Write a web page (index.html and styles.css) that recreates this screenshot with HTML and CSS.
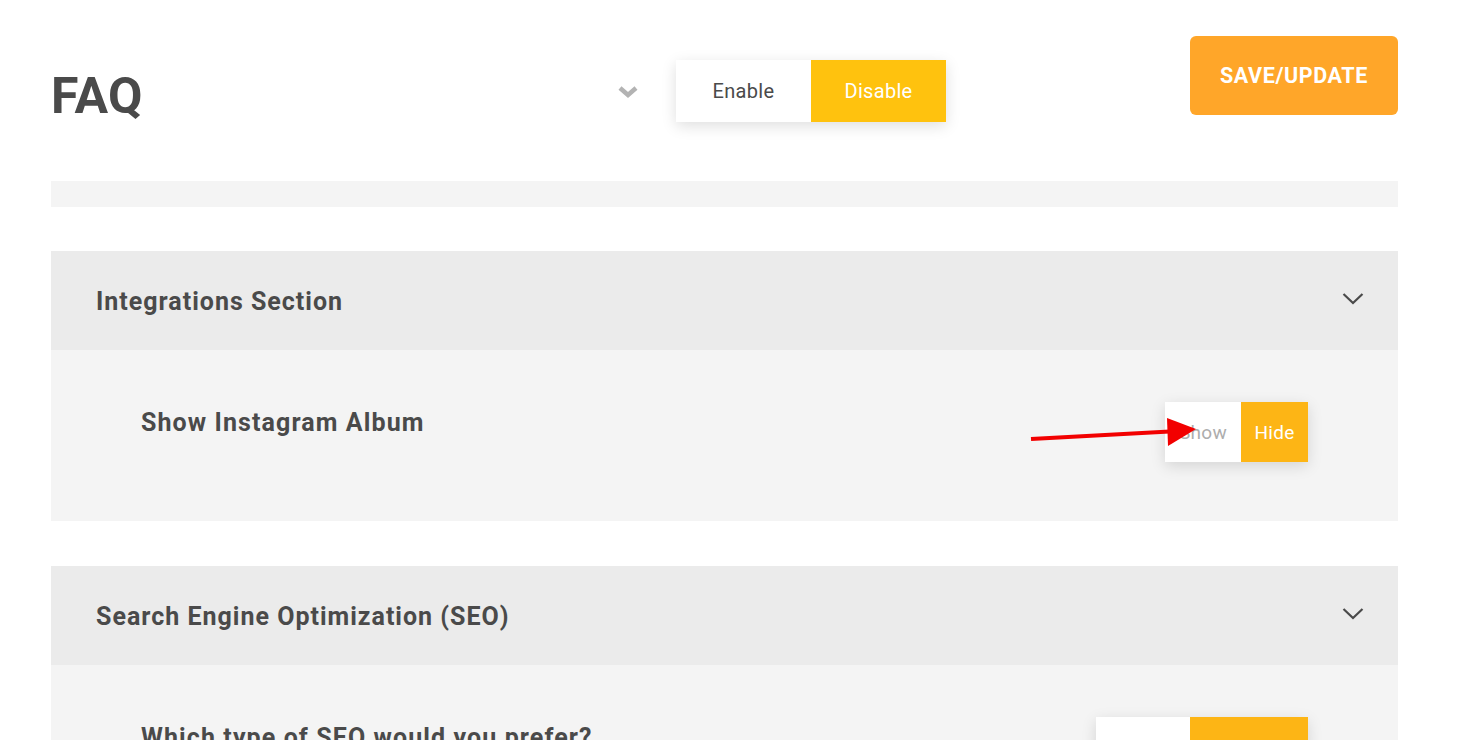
FILE: index.html
```html
<!DOCTYPE html>
<html lang="en">
<head>
    <meta charset="UTF-8">
    <meta name="viewport" content="width=device-width, initial-scale=1.0">
    <title>FAQ settings</title>
    <link rel="stylesheet" href="styles.css">
</head>
<body>
    <div class="page">
        <div class="top-bar">
            <h1>FAQ</h1>
            <div class="top-controls">
                <svg class="top-chevron" width="22" height="14" viewBox="0 0 22 14"><path d="M3 3 L11 10 L19 3" fill="none" stroke="#b3b3b3" stroke-width="4.5"/></svg>
                <div class="switch big">
                    <button class="opt">Enable</button>
                    <button class="opt on">Disable</button>
                </div>
            </div>
            <button class="save-btn">SAVE/UPDATE</button>
        </div>

        <div class="strip"></div>

        <div class="section">
            <div class="section-head">
                <h2>Integrations Section</h2>
                <svg class="chev" width="22" height="14" viewBox="0 0 22 14"><path d="M1.5 2 L11 11 L20.5 2" fill="none" stroke="#4a4a4a" stroke-width="2.2"/></svg>
            </div>
            <div class="section-body">
                <div class="row">
                    <span class="row-label">Show Instagram Album</span>
                    <div class="switch small">
                        <button class="opt muted">Show</button>
                        <button class="opt on">Hide</button>
                    </div>
                    <svg class="arrow" width="180" height="40" viewBox="0 0 180 40">
                        <line x1="2" y1="25" x2="150" y2="17" stroke="#f20000" stroke-width="4"/>
                        <polygon points="138,4 167,15 139,32" fill="#f20000"/>
                    </svg>
                </div>
            </div>
        </div>

        <div class="section">
            <div class="section-head">
                <h2>Search Engine Optimization (SEO)</h2>
                <svg class="chev" width="22" height="14" viewBox="0 0 22 14"><path d="M1.5 2 L11 11 L20.5 2" fill="none" stroke="#4a4a4a" stroke-width="2.2"/></svg>
            </div>
            <div class="section-body">
                <div class="row">
                    <span class="row-label">Which type of SEO would you prefer?</span>
                    <div class="switch small wide">
                        <button class="opt muted">Basic</button>
                        <button class="opt on">Advanced</button>
                    </div>
                </div>
            </div>
        </div>
    </div>
</body>
</html>
```

FILE: styles.css
```css
body {
    margin: 0;
    background: #fff;
    font-family: 'Roboto', 'Liberation Sans', sans-serif;
    color: #4a4a4a;
}
.page {
    padding: 36px 60px 0 51px;
}
.top-bar {
    display: flex;
    align-items: flex-start;
    height: 145px;
}
h1 {
    margin: 0;
    padding-top: 31px;
    font-size: 50px;
    font-weight: 700;
    line-height: 58px;
    width: 566px;
    letter-spacing: 0.5px;
}
.top-controls {
    display: flex;
    align-items: center;
    gap: 37px;
    margin-top: 24px;
}
.top-chevron {
    margin-top: 2px;
}
.switch {
    display: flex;
    background: #fff;
    box-shadow: 0 4px 14px rgba(0,0,0,0.13);
}
.switch .opt {
    border: none;
    background: #fff;
    font-family: inherit;
    color: #4a4a4a;
    padding: 0;
    cursor: pointer;
}
.switch .opt.on {
    background: #ffc20e;
    color: #fff;
}
.switch .opt.muted {
    color: #adadad;
}
.switch.big .opt {
    width: 135px;
    height: 62px;
    font-size: 20px;
    letter-spacing: 0.3px;
}
.save-btn {
    margin-left: auto;
    width: 208px;
    height: 79px;
    border: none;
    border-radius: 6px;
    background: #ffa629;
    color: #fff;
    font-family: inherit;
    font-size: 21.5px;
    font-weight: 700;
    letter-spacing: 0.6px;
    cursor: pointer;
}
.strip {
    height: 26px;
    background: #f4f4f4;
    margin-bottom: 44px;
}
.section {
    margin-bottom: 45px;
}
.section-head {
    display: flex;
    align-items: center;
    justify-content: space-between;
    height: 99px;
    padding: 0 34px 0 45px;
    background: #ebebeb;
}
h2 {
    margin: 0;
    font-size: 25px;
    font-weight: 700;
    letter-spacing: 1px;
    padding-top: 2px;
}
.chev {
    margin-top: -4px;
}
.section-body {
    background: #f4f4f4;
    height: 171px;
    padding: 52px 90px 0 90px;
    box-sizing: border-box;
}
.row {
    position: relative;
    display: flex;
    justify-content: space-between;
    align-items: flex-start;
}
.row-label {
    font-size: 25px;
    font-weight: 700;
    line-height: 40px;
    letter-spacing: 1.1px;
    margin-top: 1px;
}
.switch.small .opt {
    height: 60px;
    font-size: 19px;
    letter-spacing: 0.3px;
}
.switch.small .opt.muted {
    width: 76px;
}
.switch.small .opt.on {
    width: 67px;
    background: #fdb515;
}
.switch.small.wide .opt.muted {
    width: 94px;
}
.switch.small.wide .opt.on {
    width: 118px;
}
.arrow {
    position: absolute;
    left: 888px;
    top: 12px;
}
```
